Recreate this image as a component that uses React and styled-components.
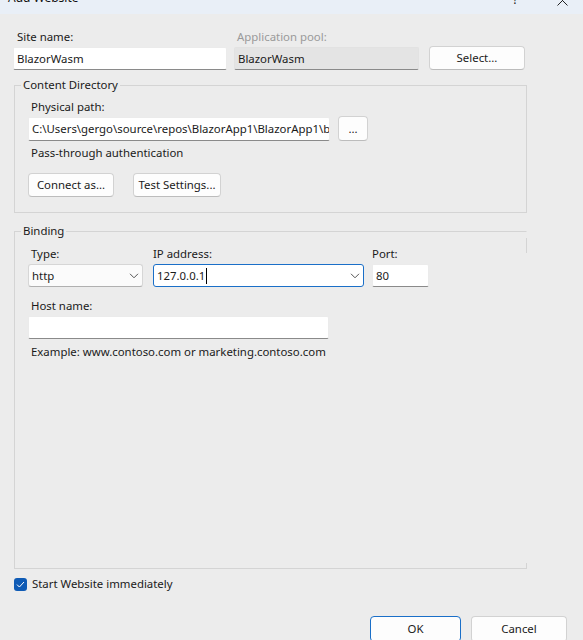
import React from "react";
import styled, { createGlobalStyle } from "styled-components";

const Global = createGlobalStyle`
  html, body { margin: 0; padding: 0; background: #ececec; }
  body { font-family: "Segoe UI", "Noto Sans", "Liberation Sans", sans-serif; font-size: 11.4px; color: #1a1a1a; overflow: hidden; }
  * { box-sizing: border-box; }
`;

const Window = styled.div`
  width: 583px;
  height: 648px;
  overflow: hidden;
  display: flex;
  flex-direction: column;
  background: #ececec;
`;

const TitleBar = styled.div`
  height: 14px;
  flex: none;
  background: #e9eff7;
  display: flex;
  align-items: flex-end;
  overflow: hidden;
`;

const Title = styled.div`
  font-size: 12px;
  line-height: 16px;
  margin: 0 0 8px 8px;
  color: #111;
`;

const TitleButtons = styled.div`
  margin-left: auto;
  display: flex;
  align-items: flex-end;
  gap: 39px;
  margin-right: 15px;
  margin-bottom: 6px;
`;

const HelpGlyph = styled.span`
  font-size: 12px;
  line-height: 16px;
  color: #222;
`;

const Body = styled.div`
  flex: 1;
  display: flex;
  flex-direction: column;
  padding: 15px 0 0 13px;
`;

const TopGrid = styled.div`
  display: grid;
  grid-template-columns: 214px 185px 96px;
  column-gap: 7px;
  row-gap: 1px;
  align-items: end;
  & > :nth-child(3n) { margin-left: 3px; }
`;

const Label = styled.div`
  line-height: 16px;
  padding-left: ${(p) => p.$indent ?? 3}px;
  color: ${(p) => (p.$disabled ? "#9a9a9a" : "#1a1a1a")};
  white-space: nowrap;
`;

const TextBox = styled.div`
  height: ${(p) => p.$h ?? 23}px;
  width: ${(p) => (p.$w ? `${p.$w}px` : "auto")};
  background: ${(p) => (p.$disabled ? "#e4e4e4" : "#ffffff")};
  border: 1px solid ${(p) => (p.$disabled ? "#e2e2e2" : "#ebebeb")};
  border-bottom: 1px solid #8a8a8a;
  border-radius: 2px;
  padding: 0 3px;
  display: flex;
  align-items: center;
  white-space: nowrap;
  overflow: hidden;
  line-height: 16px;
`;

const Button = styled.button`
  font: inherit;
  color: #1a1a1a;
  height: ${(p) => p.$h ?? 24}px;
  width: ${(p) => p.$w}px;
  background: #fdfdfd;
  border: 1px solid ${(p) => (p.$primary ? "#1a6fc8" : "#d2d2d2")};
  border-bottom-color: ${(p) => (p.$primary ? "#1a6fc8" : "#bcbcbc")};
  border-radius: 4px;
  padding: 0;
  line-height: 16px;
  flex: none;
`;

const Group = styled.fieldset`
  margin: ${(p) => p.$mt ?? 0}px 0 0 1px;
  width: 513px;
  border: 1px solid #d4d4d4;
  padding: ${(p) => p.$pt}px 13px ${(p) => p.$pb}px 13px;
  min-width: 0;
  position: relative;
  ${(p) => p.$flex && `flex: 1; border-right-color: transparent;`}
  ${(p) =>
    p.$flex &&
    `
    &::before, &::after {
      content: "";
      position: absolute;
      right: -1px;
      width: 1px;
      background: #d4d4d4;
    }
    &::before { top: -1px; height: 15px; }
    &::after { bottom: -1px; height: 6px; }
  `}
`;

const Legend = styled.legend`
  padding: 0 2px;
  margin-left: -7px;
  line-height: 16px;
`;

const Row = styled.div`
  display: flex;
  align-items: ${(p) => p.$align ?? "center"};
  gap: ${(p) => p.$gap ?? 8}px;
  margin-top: ${(p) => p.$mt ?? 0}px;
`;

const Field = styled.div`
  display: flex;
  flex-direction: column;
  gap: 2px;
  margin-top: ${(p) => p.$mt ?? 0}px;
  margin-left: ${(p) => p.$ml ?? 0}px;
`;

const Text = styled.div`
  line-height: 16px;
  padding-left: ${(p) => p.$indent ?? 3}px;
  margin-top: ${(p) => p.$mt ?? 0}px;
`;

const Select = styled.div`
  height: 23px;
  width: ${(p) => p.$w}px;
  background: ${(p) => (p.$focus ? "#ffffff" : "#fbfbfb")};
  border: 1px solid ${(p) => (p.$focus ? "#1a6fc8" : "#d6d6d6")};
  border-bottom-color: ${(p) => (p.$focus ? "#1a6fc8" : "#b0b0b0")};
  border-radius: 3px;
  display: flex;
  align-items: center;
  padding: 0 3px 0 3px;
  line-height: 16px;
`;

const SelectValue = styled.span`
  flex: 1;
  display: flex;
  align-items: center;
`;

const Caret = styled.span`
  width: 1px;
  height: 16px;
  background: #000;
  margin-left: 1px;
`;

const Chevron = () => (
  <svg width="10" height="6" viewBox="0 0 10 6" fill="none">
    <path d="M1 0.8 L5 4.8 L9 0.8" stroke="#555" strokeWidth="1" />
  </svg>
);

const CheckRow = styled.label`
  display: flex;
  align-items: center;
  gap: 5px;
  margin: 7px 0 0 1px;
  line-height: 16px;
`;

const CheckBox = styled.span`
  width: 13px;
  height: 13px;
  border-radius: 3px;
  background: #0f5bb5;
  display: flex;
  align-items: center;
  justify-content: center;
`;

const Footer = styled.div`
  display: flex;
  justify-content: flex-end;
  gap: 10px;
  padding-right: 16px;
  margin-top: 24px;
  height: 32px;
  flex: none;
`;

export default function App() {
  return (
    <>
      <Global />
      <Window>
        <TitleBar>
          <Title>Add Website</Title>
          <TitleButtons>
            <HelpGlyph>?</HelpGlyph>
            <svg width="11" height="11" viewBox="0 0 11 11" style={{ marginBottom: 2 }}>
              <path d="M0.5 0.5 L10.5 10.5 M10.5 0.5 L0.5 10.5" stroke="#222" strokeWidth="1" />
            </svg>
          </TitleButtons>
        </TitleBar>
        <Body>
          <TopGrid>
            <Label $indent={4}>Site name:</Label>
            <Label $disabled>Application pool:</Label>
            <span />
            <TextBox>BlazorWasm</TextBox>
            <TextBox $disabled>BlazorWasm</TextBox>
            <Button $w={96} $h={24}>Select...</Button>
          </TopGrid>

          <Group $mt={7} $pt={6} $pb={15}>
            <Legend>Content Directory</Legend>
            <Text>Physical path:</Text>
            <Row $gap={8} $mt={1}>
              <TextBox $w={302} $h={24}>C:\Users\gergo\source\repos\BlazorApp1\BlazorApp1\bin\Release</TextBox>
              <Button $w={30} $h={25}>...</Button>
            </Row>
            <Text $mt={4}>Pass-through authentication</Text>
            <Row $gap={19} $mt={12}>
              <Button $w={86}>Connect as...</Button>
              <Button $w={88}>Test Settings...</Button>
            </Row>
          </Group>

          <Group $mt={10} $pt={7} $pb={0} $flex>
            <Legend>Binding</Legend>
            <Row $align="flex-start" $gap={9}>
              <Field>
                <Text>Type:</Text>
                <Select $w={115}>
                  <SelectValue>http</SelectValue>
                  <Chevron />
                </Select>
              </Field>
              <Field $ml={1}>
                <Text $indent={0}>IP address:</Text>
                <Select $w={211} $focus>
                  <SelectValue>
                    127.0.0.1
                    <Caret />
                  </SelectValue>
                  <Chevron />
                </Select>
              </Field>
              <Field $ml={-1}>
                <Text $indent={0}>Port:</Text>
                <TextBox $w={57}>80</TextBox>
              </Field>
            </Row>
            <Field $mt={11}>
              <Text>Host name:</Text>
              <TextBox $w={301}></TextBox>
            </Field>
            <Text $mt={5}>Example: www.contoso.com or marketing.contoso.com</Text>
          </Group>

          <CheckRow>
            <CheckBox>
              <svg width="9" height="7" viewBox="0 0 9 7" fill="none">
                <path d="M1 3.6 L3.4 6 L8 1" stroke="#fff" strokeWidth="1" />
              </svg>
            </CheckBox>
            Start Website immediately
          </CheckRow>

          <Footer>
            <Button $w={91} $h={26} $primary>OK</Button>
            <Button $w={96} $h={26}>Cancel</Button>
          </Footer>
        </Body>
      </Window>
    </>
  );
}
